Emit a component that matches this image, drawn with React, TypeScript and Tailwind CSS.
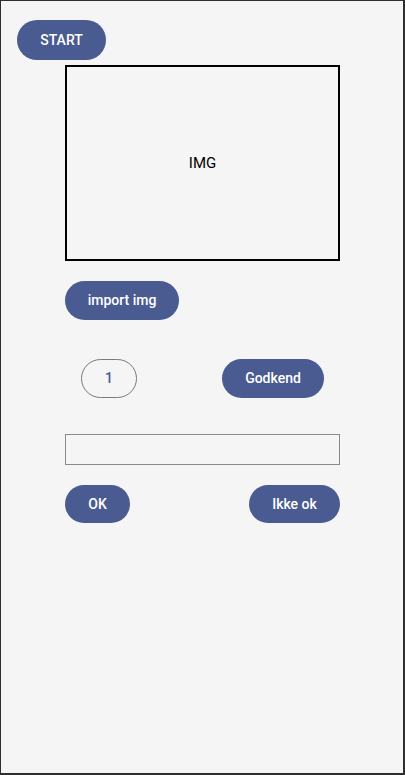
import React, { useState } from 'react';

const pill =
  'rounded-full bg-[#4a5b91] text-white text-[14px] font-medium flex items-center justify-center';

export default function App() {
  const [count] = useState(1);
  const [note, setNote] = useState('');

  return (
    <div
      className="w-[405px] h-[775px] bg-[#f5f5f5] border-l border-t border-r-2 border-b-2 border-[#2e2e2e] overflow-hidden"
      style={{ fontFamily: 'Roboto, "Noto Sans", sans-serif' }}
    >
      <div className="pt-[19px] pl-[16px]">
        <button type="button" className={`${pill} w-[89px] h-[40px] uppercase`}>
          Start
        </button>
      </div>

      <div className="ml-[64px] w-[275px] flex flex-col">
        <div className="mt-[5px] h-[196px] border-2 border-black flex items-center justify-center text-[15px] text-black">
          IMG
        </div>

        <button type="button" className={`${pill} mt-[20px] w-[114px] h-[39px]`}>
          import img
        </button>

        <div className="mt-[39px] px-[16px] flex items-center justify-between">
          <div className="w-[56px] h-[39px] rounded-full border border-[#7a7a7a] flex items-center justify-center text-[14px] font-medium text-[#4a5b91]">
            {count}
          </div>
          <button type="button" className={`${pill} w-[102px] h-[39px]`}>
            Godkend
          </button>
        </div>

        <input
          value={note}
          onChange={(e) => setNote(e.target.value)}
          className="mt-[36px] h-[31px] w-full border border-[#8a8a8a] bg-transparent outline-none px-2 text-[14px]"
        />

        <div className="mt-[20px] flex items-center justify-between">
          <button type="button" className={`${pill} w-[65px] h-[38px]`}>
            OK
          </button>
          <button type="button" className={`${pill} w-[91px] h-[38px]`}>
            Ikke ok
          </button>
        </div>
      </div>
    </div>
  );
}
